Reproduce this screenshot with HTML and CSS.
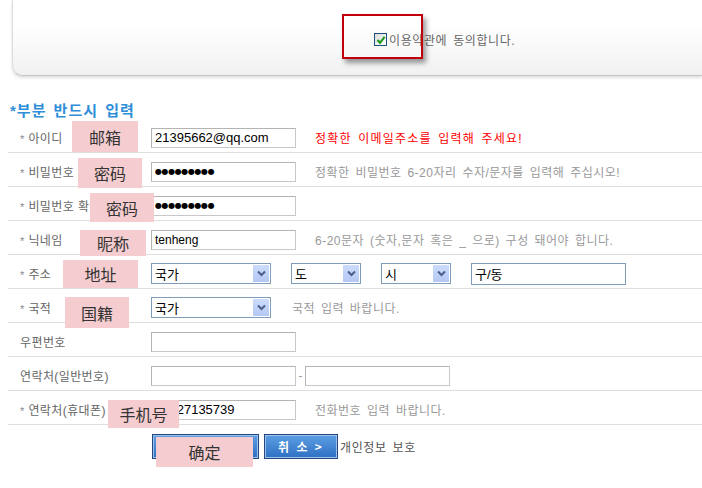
FILE: index.html
```html
<!DOCTYPE html>
<html lang="ko">
<head>
  <meta charset="UTF-8" />
  <title>회원가입</title>
  <link rel="stylesheet" href="styles.css">
</head>
<body>
<div class="page">

  <div class="terms-panel">
    <div class="agree">
      <span class="check">
        <svg width="10" height="10" viewBox="0 0 10 10"><path d="M1.5 5 L4 7.8 L8.6 1.8" fill="none" stroke="#1f9a1f" stroke-width="2.2"/></svg>
      </span>
      이용약관에 동의합니다.
    </div>
  </div>

  <div class="form">
    <h3 class="req-title">*부분 반드시 입력</h3>

    <div class="row">
      <div class="label"><span class="star">*</span> 아이디</div>
      <input class="txt" type="text" value="21395662@qq.com" />
      <span class="hint hint-red">정확한 이메일주소를 입력해 주세요!</span>
    </div>

    <div class="row">
      <div class="label"><span class="star">*</span> 비밀번호</div>
      <input class="txt pw" type="text" value="●●●●●●●●●" />
      <span class="hint">정확한 비밀번호 6-20자리 수자/문자를 입력해 주십시오!</span>
    </div>

    <div class="row">
      <div class="label"><span class="star">*</span> 비밀번호 확인</div>
      <input class="txt pw" type="text" value="●●●●●●●●●" />
    </div>

    <div class="row">
      <div class="label"><span class="star">*</span> 닉네임</div>
      <input class="txt small-text" type="text" value="tenheng" />
      <span class="hint">6-20문자 (숫자,문자 혹은 _ 으로) 구성 돼어야 합니다.</span>
    </div>

    <div class="row">
      <div class="label"><span class="star">*</span> 주소</div>
      <div class="select sel-wide">국가<span class="arrow"><svg width="9" height="7" viewBox="0 0 9 7"><path d="M1 1.5 L4.5 5 L8 1.5" fill="none" stroke="#4a5f8a" stroke-width="2"/></svg></span></div>
      <div class="select sel-short">도<span class="arrow"><svg width="9" height="7" viewBox="0 0 9 7"><path d="M1 1.5 L4.5 5 L8 1.5" fill="none" stroke="#4a5f8a" stroke-width="2"/></svg></span></div>
      <div class="select sel-short">시<span class="arrow"><svg width="9" height="7" viewBox="0 0 9 7"><path d="M1 1.5 L4.5 5 L8 1.5" fill="none" stroke="#4a5f8a" stroke-width="2"/></svg></span></div>
      <input class="txt txt-blue" type="text" value="구/동" />
    </div>

    <div class="row">
      <div class="label"><span class="star">*</span> 국적</div>
      <div class="select sel-wide">국가<span class="arrow"><svg width="9" height="7" viewBox="0 0 9 7"><path d="M1 1.5 L4.5 5 L8 1.5" fill="none" stroke="#4a5f8a" stroke-width="2"/></svg></span></div>
      <span class="hint hint-near">국적 입력 바랍니다.</span>
    </div>

    <div class="row">
      <div class="label">우편번호</div>
      <input class="txt" type="text" value="" />
    </div>

    <div class="row">
      <div class="label">연락처(일반번호)</div>
      <input class="txt" type="text" value="" />
      <span class="dash">-</span>
      <input class="txt" type="text" value="" />
    </div>

    <div class="row">
      <div class="label"><span class="star">*</span> 연락처(휴대폰)</div>
      <input class="txt" type="text" value="15827135739" />
      <span class="hint">전화번호 입력 바랍니다.</span>
    </div>

    <div class="buttons">
      <button class="btn btn-ok" aria-label="확인"></button>
      <button class="btn btn-cancel">취 소 &gt;</button>
      <span class="privacy">개인정보 보호</span>
    </div>
  </div>

  <!-- annotations laid over the page -->
  <div class="red-box"></div>
  <div class="note note-email">邮箱</div>
  <div class="note note-pw1">密码</div>
  <div class="note note-pw2">密码</div>
  <div class="note note-nick">昵称</div>
  <div class="note note-addr">地址</div>
  <div class="note note-nation">国籍</div>
  <div class="note note-phone">手机号</div>
  <div class="note note-ok">确定</div>

</div>
</body>
</html>
```

FILE: styles.css
```css
body {
  margin: 0;
  background: #fff;
  font-family: "Liberation Sans", "Noto Sans CJK KR", sans-serif;
  font-size: 12px;
  color: #666;
}
.page {
  position: relative;
  width: 702px;
  height: 488px;
  overflow: hidden;
}

/* top terms box */
.terms-panel {
  margin-left: 12px;
  height: 76px;
  box-sizing: border-box;
  padding: 31px 0 0 361px;
  background: linear-gradient(#fff 35%, #f1f1f1);
  border-left: 1px solid #dcdcdc;
  border-bottom: 1px solid #c4c4c4;
  border-bottom-left-radius: 10px;
  box-shadow: 0 2px 3px rgba(0,0,0,0.12);
}
.agree {
  display: flex;
  align-items: center;
  color: #666;
  font-size: 12px;
  letter-spacing: 0.6px;
  word-spacing: 2px;
}
.check {
  width: 11px;
  height: 11px;
  border: 1px solid #1c5180;
  background: linear-gradient(135deg, #dcdcd7, #fff);
  margin-right: 2px;
  display: flex;
  align-items: center;
  justify-content: center;
}

/* form */
.form {
  padding-left: 8px;
}
.req-title {
  margin: 25px 0 0 2px;
  height: 18px;
  font-size: 15px;
  line-height: 20px;
  letter-spacing: 1px;
  word-spacing: 2px;
  color: #2f8ed8;
  font-weight: bold;
}
.row {
  display: flex;
  align-items: center;
  box-sizing: border-box;
  height: 34px;
  padding: 8px 0 4px;
  border-bottom: 1px solid #dedede;
}
.label {
  width: 143px;
  box-sizing: border-box;
  padding-left: 12px;
  color: #666;
  font-size: 12px;
  letter-spacing: 0.4px;
  white-space: nowrap;
}
.star {
  color: #888;
  font-size: 11px;
}
.txt {
  width: 145px;
  height: 20px;
  box-sizing: border-box;
  margin: 0;
  padding: 0 3px;
  border: 1px solid #c8c8c8;
  border-top-color: #b4b4b4;
  border-left-color: #b4b4b4;
  font-family: "Liberation Sans", "Noto Sans CJK KR", sans-serif;
  font-size: 13px;
  color: #000;
  outline: none;
}
.small-text { font-size: 12px; }
.pw {
  font-family: "DejaVu Sans", sans-serif;
  font-size: 8px;
  letter-spacing: -0.4px;
}
.txt-blue {
  width: 155px;
  height: 22px;
  border: 1px solid #7f9db9;
  margin-left: 20px;
}
.hint {
  margin-left: 19px;
  color: #999;
  font-size: 12px;
  letter-spacing: 0.5px;
  word-spacing: 2px;
  white-space: nowrap;
}
.hint-red {
  color: #f00;
  letter-spacing: 1.2px;
}
.hint-near { margin-left: 21px; }
.dash {
  width: 9px;
  text-align: center;
  color: #999;
}

/* fake xp selects */
.select {
  height: 21px;
  box-sizing: border-box;
  border: 1px solid #7f9db9;
  background: #fff;
  display: flex;
  align-items: center;
  justify-content: space-between;
  padding-left: 3px;
  font-size: 13px;
  color: #000;
}
.sel-wide { width: 120px; }
.sel-short { width: 70px; margin-left: 20px; }
.arrow {
  width: 16px;
  height: 17px;
  margin-right: 1px;
  background: linear-gradient(#cddcfc, #b3c8f3);
  display: flex;
  align-items: center;
  justify-content: center;
}

/* buttons */
.buttons {
  display: flex;
  align-items: center;
  padding: 9px 0 0 144px;
}
.btn {
  height: 25px;
  box-sizing: border-box;
  border: 1px solid #23467f;
  box-shadow: inset 0 0 0 1px #9fc2ec;
  background: linear-gradient(#5d9fe3, #2d6fc2);
  color: #fff;
  font-family: "Noto Sans CJK KR", sans-serif;
  font-size: 12px;
  font-weight: bold;
  padding: 0;
  letter-spacing: 2px;
}
.btn-ok { width: 107px; }
.btn-cancel { width: 74px; margin-left: 5px; }
.privacy {
  margin-left: 2px;
  color: #555;
  font-size: 12px;
  letter-spacing: 0.6px;
  word-spacing: 2px;
}

/* annotations */
.red-box {
  position: absolute;
  left: 342px;
  top: 14px;
  width: 81px;
  height: 45px;
  box-sizing: border-box;
  border: 2px solid #c1000b;
  box-shadow: 3px 4px 5px rgba(0,0,0,0.4);
}
.note {
  position: absolute;
  background: #f5cdd0;
  color: #333;
  font-family: "Noto Sans CJK SC", sans-serif;
  font-size: 16px;
  display: flex;
  align-items: center;
  justify-content: center;
}
.note-email { left: 72px; top: 121px; width: 66px; height: 31px; }
.note-pw1 { left: 78px; top: 158px; width: 64px; height: 30px; }
.note-pw2 { left: 90px; top: 193px; width: 64px; height: 29px; }
.note-nick { left: 80px; top: 230px; width: 66px; height: 26px; }
.note-addr { left: 63px; top: 260px; width: 75px; height: 28px; }
.note-nation { left: 65px; top: 297px; width: 64px; height: 31px; }
.note-phone { left: 108px; top: 400px; width: 71px; height: 28px; }
.note-ok { left: 156px; top: 437px; width: 97px; height: 30px; }
```
